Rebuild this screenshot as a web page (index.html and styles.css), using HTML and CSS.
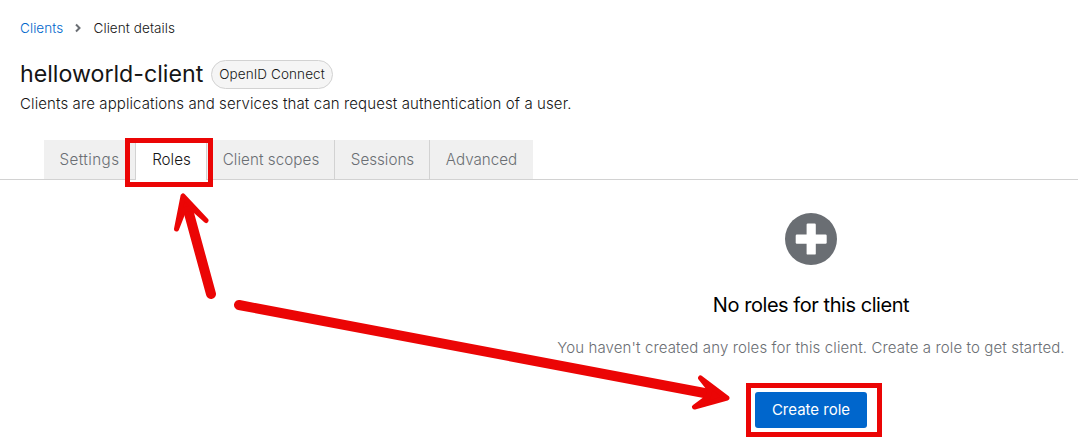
FILE: index.html
```html
<!DOCTYPE html>
<html lang="en">
<head>
<meta charset="utf-8">
<title>Client details</title>
<link rel="stylesheet" href="styles.css">
</head>
<body>
<header class="header">
  <nav class="breadcrumb">
    <a class="crumb-link" href="#">Clients</a>
    <svg class="chevron" viewBox="0 0 8 10"><path d="M2 1.5 5.5 5 2 8.5"/></svg>
    <span class="crumb-current">Client details</span>
  </nav>
  <div class="title-row">
    <h1 class="title">helloworld-client</h1>
    <span class="badge"><span class="badge-text">OpenID Connect</span></span>
  </div>
  <p class="description">Clients are applications and services that can request authentication of a user.</p>
</header>
<div class="tabs">
  <button class="tab settings"><span>Settings</span></button>
  <button class="tab roles active"><span>Roles</span></button>
  <button class="tab scopes"><span>Client scopes</span></button>
  <button class="tab sessions"><span>Sessions</span></button>
  <button class="tab advanced"><span>Advanced</span></button>
</div>
<main class="empty-state">
  <svg class="plus" viewBox="0 0 52 52">
    <circle cx="26" cy="26" r="26" fill="#6a6e73"/>
    <rect x="10.7" y="21.5" width="31" height="9.2" rx="1.2" fill="#fff"/>
    <rect x="21.6" y="10.6" width="9.2" height="31" rx="1.2" fill="#fff"/>
  </svg>
  <h2 class="empty-title">No roles for this client</h2>
  <p class="empty-text">You haven't created any roles for this client. Create a role to get started.</p>
  <button class="primary"><span>Create role</span></button>
</main>
<svg class="annotations" viewBox="0 0 1078 448">
  <rect x="127.5" y="140.500" width="83" height="44"/>
  <rect x="748.5" y="385.5" width="131" height="49"/>
  <path class="shaft" d="M211 294 187 206M239 305 715 395"/>
  <path class="head" d="M183 196 176.5 229 184 210 192 208 206 220.500ZM727 398 700.500 378 710 390 708 397 694.500 407Z"/>
</svg>
</body>
</html>
```
FILE: styles.css
```css
* { box-sizing: border-box; }
body {
  margin: 0;
  width: 1078px;
  height: 448px;
  overflow: hidden;
  position: relative;
  background: #fff;
  color: #151515;
  font: 350 15px/24px Inter, sans-serif;
  white-space: nowrap;
}
h1, h2, p { margin: 0; font-weight: 400; }
button { border: 0; padding: 0; font: inherit; }
.header { height: 140px; padding: 18px 20px 0; }
.breadcrumb { display: flex; align-items: center; height: 20px; font-size: 13.5px; letter-spacing: .08px; }
.crumb-link { width: 54px; color: #06c; text-decoration: none; }
.chevron { width: 8px; height: 10px; margin-right: 11.5px; fill: none; stroke: #6a6e73; stroke-width: 2; }
.title-row { display: flex; align-items: center; height: 32px; margin-top: 20px; }
.title { width: 191px; font-size: 23.2px; line-height: 32px; }
.badge { width: 122px; height: 29px; border: 1px solid #d2d2d2; border-radius: 15px; background: #f5f5f5; text-align: center; font-size: 13.5px; line-height: 27px; margin-top: 1px; letter-spacing: .1px; }
.description { margin-top: 2px; font-weight: 350; letter-spacing: .105px; }
.tabs { display: flex; height: 40px; padding-left: 44px; border-bottom: 1px solid #d2d2d2; }
.tab { height: 39px; background: #f0f0f0; color: #6a6e73; border-right: 1px solid #d2d2d2; text-align: center; font-size: 15.2px; }
.settings { width: 92px; letter-spacing: .4px; }
.roles { width: 71px; padding-left: 1px; }
.scopes { width: 128px; padding-left: 1px; letter-spacing: .06px; }
.sessions { width: 95px; padding-left: 1px; }
.advanced { width: 103px; border-right: 0; }
.active { height: 40px; background: #fff; color: #151515; }
.empty-state { display: flex; flex-direction: column; align-items: center; padding: 33px 0 0 544px; }
.plus { width: 52px; height: 52px; }
.empty-title { margin-top: 25px; font-size: 20px; line-height: 30px; color: #000; letter-spacing: -.45px; }
.empty-text { margin-top: 16px; height: 24px; margin-bottom: 32px; color: #6a6e73; font-weight: 350; letter-spacing: .12px; }
.primary { width: 112px; height: 36px; border-radius: 3px; background: #06c; color: #fff; font-weight: 400; }
.annotations { position: absolute; inset: 0; width: 1078px; height: 448px; pointer-events: none; fill: none; stroke: #eb0505; stroke-width: 5; }
.shaft { stroke-width: 10; stroke-linecap: round; }
.head { fill: #eb0505; stroke-linejoin: round; }
```
